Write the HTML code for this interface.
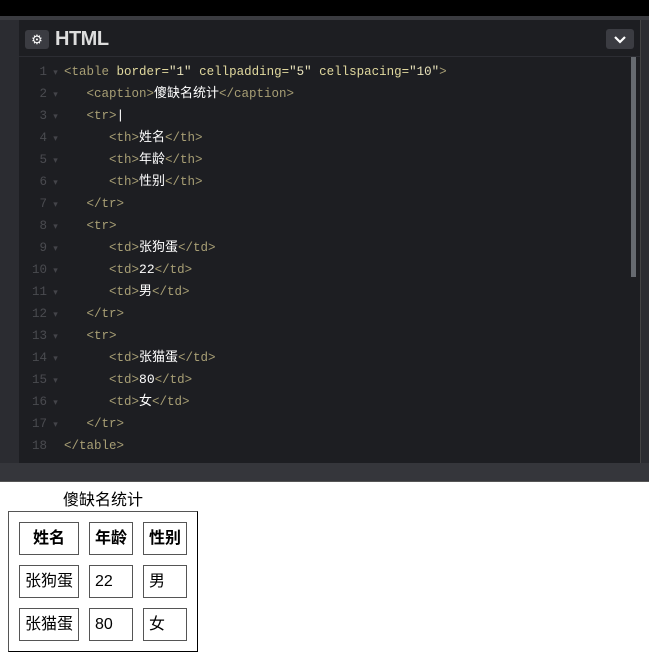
<!DOCTYPE html><html><head><meta charset="utf-8"><style>
body{margin:0;width:649px;height:665px;overflow:hidden;background:#fff;font-family:"Liberation Sans","Noto Sans CJK SC",sans-serif}
#top{position:absolute;left:0;top:0;width:649px;height:482px;background:#000}
#frame{position:absolute;left:0;top:16px;width:649px;height:465px;background:#3a3b40}
#left{position:absolute;left:0;top:20px;width:19px;height:443px;background:#2b2c31}
#panel{position:absolute;left:19px;top:20px;width:621px;height:443px;background:#1d1e22;overflow:hidden}
#right{position:absolute;left:640px;top:20px;width:9px;height:443px;background:#2b2c31;border-left:1px solid #444}
#hdr{height:36px;border-bottom:1px solid #2c2d33;position:relative}
#gear{position:absolute;left:6px;top:10px;width:24px;height:19px;background:#3b3c42;border-radius:3px;color:#fff;font-size:13px;text-align:center;line-height:19px}
#title{position:absolute;left:36px;top:8px;color:#ddd;font:bold 20px "Liberation Sans",sans-serif;letter-spacing:-0.5px}
#dd{position:absolute;left:587px;top:9px;width:28px;height:20px;background:#3b3c42;border-radius:3px}
#code{position:absolute;left:0;top:41px;font:12.5px "Liberation Mono","Noto Sans CJK SC",monospace;white-space:pre;color:#a89f75}
#code div{height:22px;line-height:22px;overflow:hidden}
.n{display:inline-block;width:28px;text-align:right;color:#4a4b50}
.a{display:inline-block;width:17px;color:#44454a;font-size:9px;text-align:center}
.at{color:#e0d89e}.v{color:#e8e2bb}.w{color:#fff;font-size:13px}
#sb{position:absolute;left:612px;top:37px;width:5px;height:220px;background:#666a70}
#bot{position:absolute;left:0;top:463px;width:649px;height:18px;background:#35363b;border-bottom:1px solid #555}
table{position:absolute;left:8px;top:490px;font-size:16px;line-height:21px;border-color:#555;font-family:"Liberation Sans","Noto Sans CJK SC",sans-serif}
td,th{border:1px solid #555;line-height:21px;height:21px}
caption{line-height:21px}
</style></head><body>
<div id="top"></div><div id="frame"></div><div id="left"></div>
<div id="panel"><div id="hdr"><div id="gear">⚙</div><div id="title">HTML</div><div id="dd"><svg width="28" height="20"><path d="M9 8l5 5 5-5" stroke="#fff" stroke-width="2.2" fill="none"/></svg></div></div>
<div id="code"><div><span class="n">1</span><span class="a">▾</span>&lt;table <span class="at">border=</span><span class="v">"1"</span> <span class="at">cellpadding=</span><span class="v">"5"</span> <span class="at">cellspacing=</span><span class="v">"10"</span>&gt;</div><div><span class="n">2</span><span class="a">▾</span>   &lt;caption&gt;<span class="w">傻缺名统计</span>&lt;/caption&gt;</div><div><span class="n">3</span><span class="a">▾</span>   &lt;tr&gt;<span class="w">|</span></div><div><span class="n">4</span><span class="a">▾</span>      &lt;th&gt;<span class="w">姓名</span>&lt;/th&gt;</div><div><span class="n">5</span><span class="a">▾</span>      &lt;th&gt;<span class="w">年龄</span>&lt;/th&gt;</div><div><span class="n">6</span><span class="a">▾</span>      &lt;th&gt;<span class="w">性别</span>&lt;/th&gt;</div><div><span class="n">7</span><span class="a">▾</span>   &lt;/tr&gt;</div><div><span class="n">8</span><span class="a">▾</span>   &lt;tr&gt;</div><div><span class="n">9</span><span class="a">▾</span>      &lt;td&gt;<span class="w">张狗蛋</span>&lt;/td&gt;</div><div><span class="n">10</span><span class="a">▾</span>      &lt;td&gt;<span class="w">22</span>&lt;/td&gt;</div><div><span class="n">11</span><span class="a">▾</span>      &lt;td&gt;<span class="w">男</span>&lt;/td&gt;</div><div><span class="n">12</span><span class="a">▾</span>   &lt;/tr&gt;</div><div><span class="n">13</span><span class="a">▾</span>   &lt;tr&gt;</div><div><span class="n">14</span><span class="a">▾</span>      &lt;td&gt;<span class="w">张猫蛋</span>&lt;/td&gt;</div><div><span class="n">15</span><span class="a">▾</span>      &lt;td&gt;<span class="w">80</span>&lt;/td&gt;</div><div><span class="n">16</span><span class="a">▾</span>      &lt;td&gt;<span class="w">女</span>&lt;/td&gt;</div><div><span class="n">17</span><span class="a">▾</span>   &lt;/tr&gt;</div><div><span class="n">18</span><span class="a"> </span>&lt;/table&gt;</div></div>
<div id="sb"></div></div>
<div id="right"></div><div id="bot"></div>
<table border="1" cellpadding="5" cellspacing="10"><caption>傻缺名统计</caption>
<tr><th>姓名</th><th>年龄</th><th>性别</th></tr>
<tr><td>张狗蛋</td><td>22</td><td>男</td></tr>
<tr><td>张猫蛋</td><td>80</td><td>女</td></tr></table>
</body></html>
